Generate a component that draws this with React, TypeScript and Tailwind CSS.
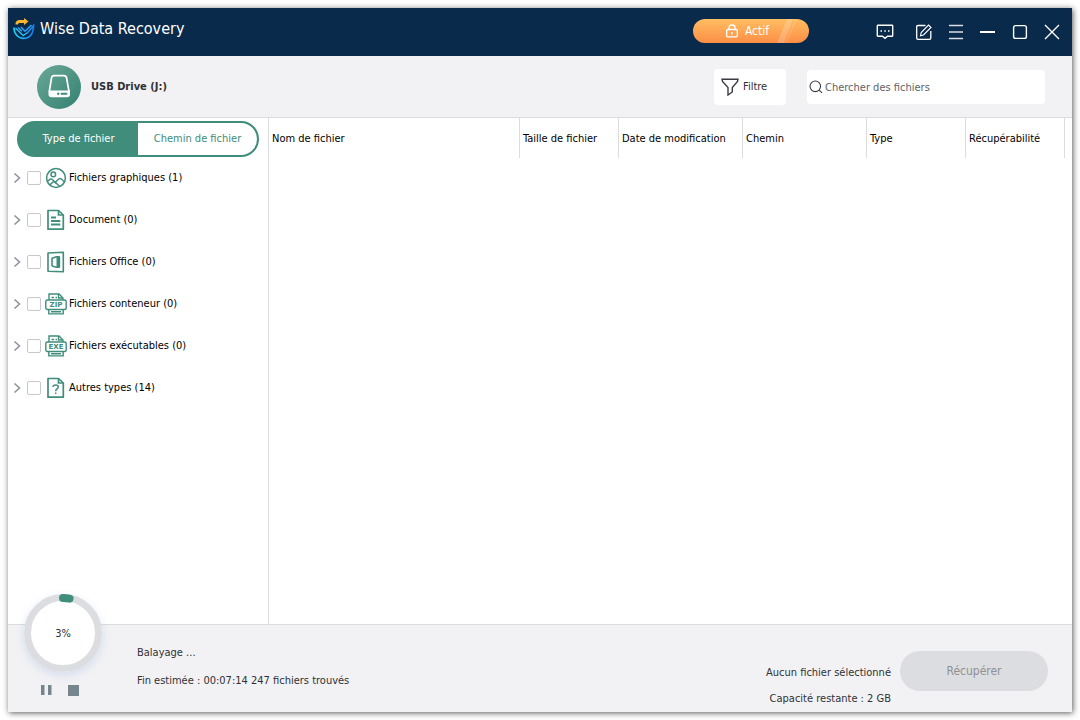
import { useState, type ReactNode } from "react";

const GREEN = "#408d7b";

function LogoIcon() {
  return (
    <svg className="size-[22px]" viewBox="0 0 22 22" fill="none" aria-hidden="true">
      <defs>
        <linearGradient id="logo-blue" x1="0" y1="0" x2="1" y2="0">
          <stop offset="0" stopColor="#22d3f5" />
          <stop offset="1" stopColor="#1d7df0" />
        </linearGradient>
      </defs>
      <path d="M2.500 6.500C2.500 3 4.500 2 7 2H11V0L15.500 3.500L11 7V5H7C5.800 5 5 5.500 5 6.500Z" fill="#f7b62f" />
      <path d="M1 9.500C1 16.500 5.500 20.400 10.500 20.400C16.500 20.400 20.300 16 20.600 7.500L13.800 15.500" stroke="url(#logo-blue)" strokeWidth="1.600" />
      <path d="M2.500 10L10.200 17.600L13.800 15" stroke="#28bdf5" strokeWidth="1.400" />
      <path d="M5 9.500L8.800 13.300M8 9L12 13.200L18.500 7" stroke="#2aa5f5" strokeWidth="1.500" />
    </svg>
  );
}

function DriveIcon() {
  return (
    <svg className="size-11" viewBox="0 0 44 44" fill="none" aria-hidden="true">
      <defs>
        <linearGradient id="drive-bg" x1="0" y1="0" x2="1" y2="1">
          <stop offset="0" stopColor="#6aa898" />
          <stop offset="1" stopColor="#348171" />
        </linearGradient>
      </defs>
      <circle cx="22" cy="22" r="22" fill="url(#drive-bg)" />
      <path d="M12.300 26.500L14.500 13Q15 10.700 17 10.700H27Q29.200 10.700 29.600 13L32 26.500" stroke="#fff" strokeWidth="1.700" />
      <path d="M11.500 25.500H33V29.500Q33 32.300 30 32.300H14.500Q11.500 32.300 11.500 29.500Z" fill="#fff" />
      <circle cx="21.200" cy="28.800" r="1.200" fill={GREEN} />
      <path d="M24.500 28.800H29.500" stroke={GREEN} strokeWidth="2" strokeLinecap="round" />
    </svg>
  );
}

function ImageIcon() {
  return (
    <svg className="size-[22px]" viewBox="0 0 22 22" fill="none" stroke={GREEN} strokeWidth="1.500" aria-hidden="true">
      <circle cx="11" cy="11" r="9.400" />
      <circle cx="8.300" cy="7.400" r="2.300" />
      <path d="M2.200 14.500L5.200 12.200Q6.300 11.500 7.300 12.500L11.500 16.500L8.500 14.500L4.800 18" />
      <path d="M10 15.500L14 11.800Q15 11 16 11.800L20 15.200M10.500 15.500L14.500 19.300" />
    </svg>
  );
}

function DocumentIcon() {
  return (
    <svg className="size-[22px]" viewBox="0 0 22 22" fill="none" stroke={GREEN} strokeWidth="1.700" aria-hidden="true">
      <path d="M3 1.500H13.500L18.300 6V20.200H3Z" strokeLinejoin="round" />
      <path d="M13.500 1.800V6H18.300" />
      <path d="M6 8.500H11M6 12H15.300M6 15.500H15.300" strokeWidth="1.900" />
    </svg>
  );
}

function OfficeIcon() {
  return (
    <svg className="size-[22px]" viewBox="0 0 22 22" fill="none" stroke={GREEN} strokeWidth="1.600" strokeLinejoin="round" aria-hidden="true">
      <path d="M3 2L18.300 1.200V20.800L3 20.200Z" />
      <path d="M7 15V7.300L11.500 5.800H14.200V16.200H11.500L7 15" strokeWidth="1.600" />
      <path d="M12 5.800L14.700 6.200V16L12 16.500Z" fill={GREEN} strokeWidth="1" />
    </svg>
  );
}

function ArchiveIcon({ tag }: { tag: string }) {
  return (
    <svg className="size-[22px]" viewBox="0 0 22 22" fill="none" stroke={GREEN} strokeWidth="1.400" aria-hidden="true">
      <path d="M4 7V1H14L18 5V7" />
      <path d="M13.500 1V5H18M6.500 4.500H9M10.500 4.500H12" />
      <rect x=".8" y="7" width="20.400" height="9.500" rx="1.500" />
      <path d="M3.800 16.500V20.900H18.200V16.500M6 18.700H16" />
      <text x="11" y="14.300" textAnchor="middle" fill={GREEN} stroke="none" className="font-[DejaVu_Sans,sans-serif] text-[7px] font-bold">{tag}</text>
    </svg>
  );
}

function OtherIcon() {
  return (
    <svg className="size-[22px]" viewBox="0 0 22 22" fill="none" stroke={GREEN} strokeWidth="1.700" aria-hidden="true">
      <path d="M3 1.500H13.500L18.300 6V20.200H3Z" strokeLinejoin="round" />
      <path d="M13.500 1.800V6H18.300" />
      <path d="M8 10C8 7.200 13.300 7.300 13.300 10C13.300 12 10.700 11.800 10.700 14.200M10.700 15.500V17" strokeWidth="1.500" />
    </svg>
  );
}

function WindowButton({ label, children, className = "" }: { label: string; children: ReactNode; className?: string }) {
  return (
    <button type="button" aria-label={label} className={`flex size-8 items-center justify-center text-white ${className}`}>
      <svg className="size-[18px]" viewBox="0 0 18 18" fill="none" stroke="currentColor" strokeWidth="1.400" aria-hidden="true">
        {children}
      </svg>
    </button>
  );
}

function TitleBar() {
  return (
    <header className="flex h-12 items-center bg-[#0a2a4b] pr-1 pl-[5px]">
      <div className="flex items-center gap-[5px] self-start pt-[9px] text-white">
        <LogoIcon />
        <h1 className="text-[16px] leading-6">Wise Data Recovery</h1>
      </div>
      <button type="button" className="relative mr-[60px] mb-[2px] ml-auto flex h-6 w-[116px] items-center justify-center gap-[6px] overflow-hidden rounded-full bg-linear-to-b from-[#ffbd62] to-[#fb8e45] pr-2 text-[12px] text-white">
        <svg className="absolute top-0 right-3 h-6 w-5" viewBox="0 0 20 24" aria-hidden="true">
          <path d="M10 0H16L7 24H0Z" fill="#fff" opacity=".2" />
          <path d="M18 0H20L10 24H8Z" fill="#fff" opacity=".12" />
        </svg>
        <svg className="size-[14px]" viewBox="0 0 14 14" fill="none" stroke="currentColor" strokeWidth="1.300" aria-hidden="true">
          <rect x="1.700" y="5.500" width="10.600" height="7.300" rx="1" />
          <path d="M4 5.500V3.500Q4 1 7 1T10 3.500V5.500M7 8V10.500" />
        </svg>
        Actif
      </button>
      <WindowButton label="Commentaires" className="mr-[7px]">
        <path d="M2 2.300H16Q16.700 2.300 16.700 3V12.500Q16.700 13.300 16 13.300H11.500L9 15.300L6.500 13.300H2Q1.300 13.300 1.300 12.500V3Q1.300 2.300 2 2.300Z" />
        <path d="M4.500 8H6M8.300 8H9.800M12 8H13.500" strokeWidth="1.600" />
      </WindowButton>
      <WindowButton label="Enregistrement">
        <path d="M10.500 2.500H3Q1.700 2.500 1.700 3.800V15Q1.700 16.300 3 16.300H14.500Q15.800 16.300 15.800 15V8" strokeWidth="1.300" />
        <path d="M13.500 2L16 4.500L8.500 12L5.500 12.700L6.200 9.600Z" strokeWidth="1.100" />
      </WindowButton>
      <WindowButton label="Menu">
        <path d="M2 2.500H16M2 9H16M2 15.500H16" strokeWidth="1.600" opacity=".85" />
      </WindowButton>
      <WindowButton label="Réduire">
        <path d="M1 9H16" strokeWidth="2" />
      </WindowButton>
      <WindowButton label="Agrandir">
        <rect x="2.600" y="2.600" width="12.800" height="12.800" rx="2" />
      </WindowButton>
      <WindowButton label="Fermer">
        <path d="M2 2L16 16M16 2L2 16" />
      </WindowButton>
    </header>
  );
}

function Toolbar() {
  return (
    <div className="flex items-center border-b border-[#dcdcde] bg-[#f2f2f5] pt-[9px] pr-[27px] pb-2 pl-[29px]">
      <DriveIcon />
      <h2 className="ml-[10px] font-bold">USB Drive (J:)</h2>
      <button type="button" className="ml-auto flex h-9 w-[72px] items-center gap-1 rounded-[4px] bg-white pl-[7px]">
        <svg className="size-[18px]" viewBox="0 0 18 18" fill="none" stroke="#3a3c44" strokeWidth="1.400" aria-hidden="true">
          <path d="M1 1.200H17L16.500 3.500L11.300 9.500V14L7 17V9.500L1.500 3.500Z" />
        </svg>
        Filtre
      </button>
      <div className="ml-[21px] flex h-[34px] w-[238px] items-center gap-[2px] rounded-[4px] bg-white pl-[2px]">
        <svg className="size-[14px] shrink-0" viewBox="0 0 14 14" fill="none" stroke="#3a3c44" strokeWidth="1.100" aria-hidden="true">
          <circle cx="6.300" cy="6.300" r="5.300" />
          <path d="M10.200 10.200L13 12.800" />
        </svg>
        <input type="text" aria-label="Chercher des fichiers" placeholder="Chercher des fichiers" className="h-full w-full min-w-0 bg-transparent outline-none placeholder:text-[#606266]" />
      </div>
    </div>
  );
}

const categories = [
  { name: "Fichiers graphiques", count: 1, icon: <ImageIcon /> },
  { name: "Document", count: 0, icon: <DocumentIcon /> },
  { name: "Fichiers Office", count: 0, icon: <OfficeIcon /> },
  { name: "Fichiers conteneur", count: 0, icon: <ArchiveIcon tag="ZIP" /> },
  { name: "Fichiers exécutables", count: 0, icon: <ArchiveIcon tag="EXE" /> },
  { name: "Autres types", count: 14, icon: <OtherIcon /> },
];

function Sidebar() {
  const [tab, setTab] = useState(0);
  const fill = tab === 0 ? "bg-linear-to-r" : "bg-linear-to-l";
  return (
    <aside className="w-[261px] shrink-0 border-r border-[#dcdcde] pt-[3px]">
      <div role="tablist" className={`mx-[9px] flex h-9 rounded-full border-2 border-[#408d7b] from-[#408d7b] from-50% to-white to-50% ${fill}`}>
        {["Type de fichier", "Chemin de fichier"].map((name, i) => (
          <button
            key={name}
            type="button"
            role="tab"
            aria-selected={tab === i}
            onClick={() => setTab(i)}
            className={tab === i ? "flex-1 text-white" : "flex-1 text-[#408d7b]"}
          >
            {name}
          </button>
        ))}
      </div>
      <ul className="text-black">
        {categories.map((c) => (
          <li key={c.name} className="flex h-[42px] items-center pl-[5px]">
            <button type="button" aria-label={`Développer ${c.name}`} className="mr-[6px]">
              <svg className="h-3 w-2" viewBox="0 0 8 12" fill="none" stroke="#8b8f99" strokeWidth="1.500" aria-hidden="true">
                <path d="M1.500 1.500L6.500 6L1.500 10.500" />
              </svg>
            </button>
            <label className="flex items-center">
              <input type="checkbox" className="size-[14px] appearance-none rounded-[2px] border border-[#c8c8ca] bg-white checked:bg-[#408d7b]" />
              <span className="mr-[2px] ml-1">{c.icon}</span>
              {c.name} ({c.count})
            </label>
          </li>
        ))}
      </ul>
    </aside>
  );
}

function FileTable() {
  const head = "border-r border-[#dcdcde] pt-[2px] pl-[3px] text-left font-normal";
  return (
    <main className="min-w-0 flex-1 pr-[7px]">
      <table className="w-full table-fixed text-black">
        <thead>
          <tr className="h-10">
            <th className={head}>Nom de fichier</th>
            <th className={`${head} w-[99px]`}>Taille de fichier</th>
            <th className={`${head} w-[124px]`}>Date de modification</th>
            <th className={`${head} w-[124px]`}>Chemin</th>
            <th className={`${head} w-[99px]`}>Type</th>
            <th className={`${head} w-[99px]`}>Récupérabilité</th>
          </tr>
        </thead>
        <tbody />
      </table>
    </main>
  );
}

function Progress({ value }: { value: number }) {
  return (
    <div className="absolute -top-[31px] left-4 flex size-[78px] items-center justify-center rounded-full bg-white shadow-[0_3px_8px_rgba(120,150,210,0.25)]">
      <svg className="absolute inset-0 size-[78px]" viewBox="0 0 78 78" fill="none" strokeWidth="7" role="progressbar" aria-valuenow={value} aria-label="Balayage">
        <circle cx="39" cy="39" r="35.500" stroke="#dcdde1" />
        <circle cx="39" cy="39" r="35" stroke={GREEN} strokeWidth="8" strokeLinecap="round" pathLength="100" strokeDasharray={`${value} 100`} transform="rotate(-90 39 39)" />
      </svg>
      <span className="relative pt-[2px]">{value}%</span>
    </div>
  );
}

function Footer() {
  return (
    <footer className="relative flex h-[88px] border-t border-[#dcdcde] bg-[#f2f2f5]">
      <Progress value={3} />
      <div className="flex w-[129px] items-end gap-4 pb-4 pl-8">
        <button type="button" aria-label="Pause">
          <svg className="h-3 w-3" viewBox="0 0 12 12" fill="#76868d" aria-hidden="true">
            <path d="M1 1H4.500V11H1ZM8 1H11.500V11H8Z" />
          </svg>
        </button>
        <button type="button" aria-label="Arrêter" className="size-[11px] bg-[#76868d]" />
      </div>
      <div className="flex flex-col gap-3 pt-5">
        <p>Balayage ...</p>
        <p>Fin estimée : 00:07:14 247 fichiers trouvés</p>
      </div>
      <div className="ml-auto flex flex-col gap-[10px] pt-10 text-right">
        <p>Aucun fichier sélectionné</p>
        <p>Capacité restante : 2 GB</p>
      </div>
      <button type="button" disabled className="mt-[26px] mr-6 ml-[9px] h-10 w-[148px] rounded-full bg-[#dcdde0] text-[12px] text-[#8f9094]">
        Récupérer
      </button>
    </footer>
  );
}

export default function App() {
  return (
    <div className="flex min-h-screen bg-white p-2 font-[DejaVu_Sans_Condensed,Noto_Sans,sans-serif] text-[11px] leading-4 text-[#303133]">
      <div className="flex min-w-0 flex-1 flex-col bg-white shadow-[1px_1px_6px_rgba(0,0,0,0.65)]">
        <TitleBar />
        <Toolbar />
        <div className="flex flex-1">
          <Sidebar />
          <FileTable />
        </div>
        <Footer />
      </div>
    </div>
  );
}
